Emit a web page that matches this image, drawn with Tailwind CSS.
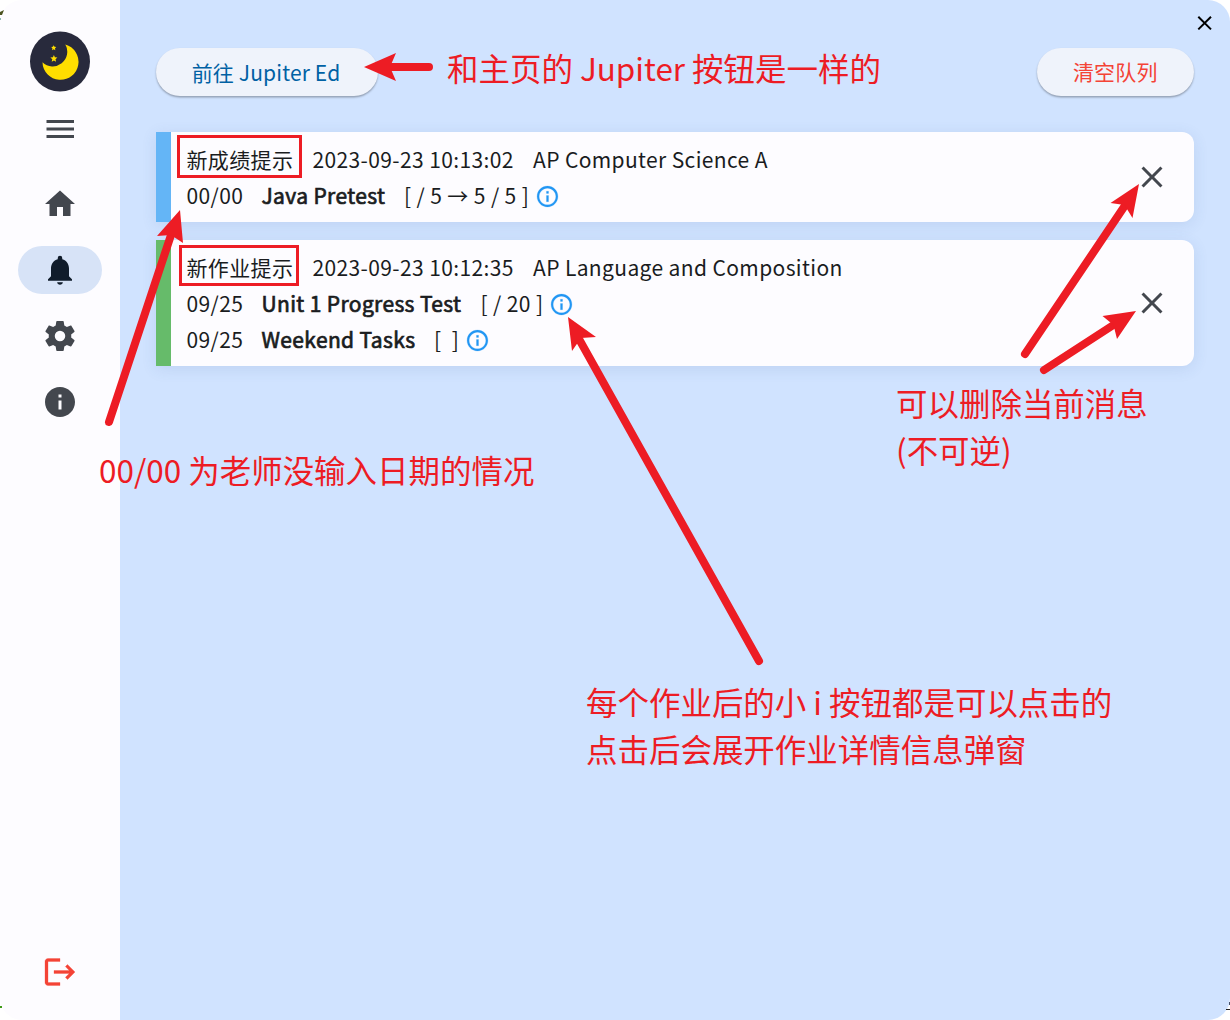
<!DOCTYPE html>
<html lang="zh-CN">
<head>
<meta charset="utf-8">
<title>Jupiter</title>
<script src="https://cdn.jsdelivr.net/npm/@tailwindcss/browser@4"></script>
</head>
<body class="relative h-[1020px] w-[1230px] overflow-hidden bg-white font-['Noto_Sans_CJK_SC',sans-serif] text-[21px] tracking-[0.375px] text-[#1a1c1e]">
<svg width="0" height="0" class="absolute">
  <symbol id="close" viewBox="0 0 24 24"><path d="M19 6.41 17.59 5 12 10.59 6.41 5 5 6.41 10.59 12 5 17.59 6.41 19 12 13.41 17.59 19 19 17.59 13.41 12z"/></symbol>
  <symbol id="info" viewBox="0 0 24 24"><path d="M11 7h2v2h-2zm0 4h2v6h-2zm1-9C6.48 2 2 6.48 2 12s4.48 10 10 10 10-4.48 10-10S17.52 2 12 2zm0 18c-4.41 0-8-3.59-8-8s3.59-8 8-8 8 3.59 8 8-3.59 8-8 8z" stroke="#2196f3" stroke-width=".2"/></symbol>
</svg>
<div class="flex h-full w-full overflow-hidden rounded-[22px]">
  <nav class="flex w-[120px] shrink-0 flex-col items-center bg-[#fdfcff] pt-[31px] pb-[30px] text-[#43474e]">
    <svg class="h-[61px] w-[60px]" viewBox="0 0 60 61"><circle cx="30" cy="30.5" r="30" fill="#282a3c"/><path d="M35.3 13.5A18 18 0 1 1 12.5 31.3 14.6 14.6 0 0 0 35.3 13.500Z" fill="#ffde00"/><path d="m23.700 14.200.8 1.600 1.800.2-1.300 1.300.3 1.900-1.600-.9-1.600.9.3-1.900-1.300-1.300 1.800-.2zM23.900 24l1 2.300 2.500.3-1.900 1.700.6 2.400-2.200-1.200-2.200 1.200.6-2.400-1.900-1.700 2.500-.3z" fill="#ffde00"/></svg>
    <svg class="mt-[19px] size-9" viewBox="0 0 36 36" fill="currentColor"><path d="M4.500 9h27.500v3H4.500zM4.500 16.500h27.500v3H4.500zM4.500 24h27.500v3H4.500z"/></svg>
    <div class="mt-[33px] flex h-12 w-[84px] items-center justify-center"><svg class="size-9" viewBox="0 0 24 24" fill="currentColor"><path d="M10 20v-6h4v6h5v-8h3L12 3 2 12h3v8z"/></svg></div>
    <div class="mt-[18px] flex h-12 w-[84px] items-center justify-center rounded-full bg-[#d7e3f7] text-[#101c2b]"><svg class="size-9" viewBox="0 0 24 24" fill="currentColor"><path d="M12 21.800c1 0 1.900-.8 1.900-1.700h-3.800c0 .9.900 1.700 1.900 1.700zM18 16.200v-5.100c0-3.100-1.600-5.600-4.500-6.300V4a1.500 1.500 0 0 0-3 0v.8C7.600 5.500 6 8 6 11.100v5.100l-2 2v.9h16v-.9z"/></svg></div>
    <div class="mt-[18px] flex h-12 w-[84px] items-center justify-center"><svg class="size-9" viewBox="0 0 24 24" fill="currentColor"><path d="M12 15.500A3.500 3.500 0 0 1 8.500 12 3.500 3.500 0 0 1 12 8.500a3.500 3.500 0 0 1 3.500 3.500 3.500 3.500 0 0 1-3.500 3.500m7.430-2.530c.04-.32.07-.64.07-.97s-.03-.66-.07-1l2.110-1.630c.19-.15.24-.42.12-.64l-2-3.460c-.12-.22-.39-.31-.61-.22l-2.490 1c-.52-.39-1.060-.73-1.690-.98l-.37-2.650A.506.506 0 0 0 14 2h-4c-.25 0-.46.18-.5.42l-.37 2.650c-.63.25-1.170.59-1.690.98l-2.490-1c-.22-.09-.49 0-.61.22l-2 3.460c-.13.22-.07.49.12.64L4.570 11c-.04.34-.07.67-.07 1s.03.65.07.97l-2.110 1.660c-.19.15-.25.42-.12.64l2 3.460c.12.22.39.3.61.22l2.490-1.010c.52.4 1.060.74 1.690.99l.37 2.650c.04.24.25.42.5.42h4c.25 0 .46-.18.5-.42l.37-2.650c.63-.26 1.170-.59 1.690-.99l2.490 1.010c.22.08.49 0 .61-.22l2-3.460c.12-.22.07-.49-.12-.64z"/></svg></div>
    <div class="mt-[18px] flex h-12 w-[84px] items-center justify-center"><svg class="size-9" viewBox="0 0 24 24" fill="currentColor"><path d="M12 2C6.480 2 2 6.480 2 12s4.480 10 10 10 10-4.480 10-10S17.520 2 12 2zm1 15h-2v-6h2zm0-8h-2V7h2z"/></svg></div>
    <svg class="mt-auto size-9 text-[#f44336]" viewBox="0 0 24 24" fill="currentColor"><path d="m17 7-1.410 1.410L18.170 11H8v2h10.170l-2.580 2.580L17 17l5-5zM4 5h8V3H4c-1.100 0-2 .9-2 2v14c0 1.100.9 2 2 2h8v-2H4z" stroke="currentColor" stroke-width=".2"/></svg>
  </nav>
  <main class="relative flex grow flex-col bg-[#d0e3ff] px-9 pt-12">
    <svg class="absolute top-[11px] right-[13px] size-6" viewBox="0 0 24 24" stroke="#000" stroke-width="2" fill="none"><path d="m5.300 5.700 12.700 12.700M18 5.700 5.300 18.400"/></svg>
    <div class="mb-9 flex justify-between">
      <button class="h-12 w-[222px] rounded-full bg-[#eff3fb] pt-px pr-[2px] tracking-[0.15px] text-[#0061a4] shadow-[0_1.500px_2px_rgba(0,0,0,0.3)]">前往 Jupiter Ed</button>
      <button class="h-12 w-[157.5px] rounded-full bg-[#eff3fb] tracking-[0.15px] text-[#f44336] shadow-[0_1.500px_2px_rgba(0,0,0,0.3)]">清空队列</button>
    </div>
    <section class="mb-[18px] flex h-[90px] items-center rounded-r-xl border-l-[15px] border-[#64b5f6] bg-[#fdfcff] pr-6 pl-[15.5px] leading-9 shadow-[0_3px_15px_rgba(60,90,150,0.12)]">
      <div class="grow">
        <div class="flex"><span class="w-[126px]">新成绩提示</span><span class="w-[220.500px]">2023-09-23 10:13:02</span><span>AP Computer Science A</span></div>
        <div class="flex items-center"><span class="w-[75px]">00/00</span><span class="w-[142.500px] [-webkit-text-stroke:0.700px_currentColor]">Java Pretest</span><span class="w-[130.500px]">[ / 5 → 5 / 5 ]</span><svg class="mt-0.5 size-[25px] fill-[#2196f3]"><use href="#info"/></svg></div>
      </div>
      <svg class="size-9 fill-[#43474e]"><use href="#close"/></svg>
    </section>
    <section class="flex h-[126px] items-center rounded-r-xl border-l-[15px] border-[#66bb6a] bg-[#fdfcff] pr-6 pl-[15.5px] leading-9 shadow-[0_3px_15px_rgba(60,90,150,0.12)]">
      <div class="grow">
        <div class="flex"><span class="w-[126px]">新作业提示</span><span class="w-[220.500px]">2023-09-23 10:12:35</span><span>AP Language and Composition</span></div>
        <div class="flex items-center"><span class="w-[75px]">09/25</span><span class="w-[219px] [-webkit-text-stroke:0.700px_currentColor]">Unit 1 Progress Test</span><span class="w-[68px]">[ / 20 ]</span><svg class="mt-0.5 size-[25px] fill-[#2196f3]"><use href="#info"/></svg></div>
        <div class="flex items-center"><span class="w-[75px]">09/25</span><span class="w-[172.500px] [-webkit-text-stroke:0.700px_currentColor]">Weekend Tasks</span><span class="w-[30.500px]">[&nbsp; ]</span><svg class="mt-0.5 size-[25px] fill-[#2196f3]"><use href="#info"/></svg></div>
      </div>
      <svg class="size-9 fill-[#43474e]"><use href="#close"/></svg>
    </section>
  </main>
</div>
<!-- annotations over the window -->
<svg class="absolute inset-0" width="1230" height="1020" fill="#ed1c24" stroke="#ed1c24">
  <g fill="none" stroke-width="3"><path d="M178.500 136.500h122v40h-122zM180.500 246.500h117v38h-117z"/></g>
  <g stroke-width="8" stroke-linecap="round"><path d="M429 67H385M109 422 172 232M759 661 579 339M1025 354 1128 201M1044 370 1118 322"/></g>
  <g stroke="none">
    <path d="m364 67 32-14-6 14 6 14zM180 210l-23 26 14-1 12 8zM568 317l28 20-15 1-9 13zM1139 184l-28.500 19 14 2 8 13zM1136 311l-33.500 5 11 9 3.500 14z"/>
  </g>
</svg>
<div class="absolute inset-0 text-[31.480px] leading-[47px] tracking-normal whitespace-nowrap text-[#ed1c24]">
  <p class="absolute top-[44px] left-[447px]">和主页的 Jupiter 按钮是一样的</p>
  <p class="absolute top-[446px] left-[99px]">00/00 为老师没输入日期的情况</p>
  <p class="absolute top-[379px] left-[896px]">可以删除当前消息<br>(不可逆)</p>
  <p class="absolute top-[678px] left-[586px]">每个作业后的小 i 按钮都是可以点击的<br>点击后会展开作业详情信息弹窗</p>
</div>
<!-- desktop visible beyond the rounded corners -->
<svg class="absolute inset-0" width="1230" height="1020"><path d="M0 12 4 10 2 15H0z" fill="#4b5320"/><path d="M0 18h1v2H0z" fill="#8cb8b0"/><path d="M0 1006h2v2H0z" fill="#3f9a18"/><path d="M1226 1009h4v1h-4z" fill="#222"/><path d="M1229 1002h1v3h-1z" fill="#45506a"/></svg>
</body>
</html>
